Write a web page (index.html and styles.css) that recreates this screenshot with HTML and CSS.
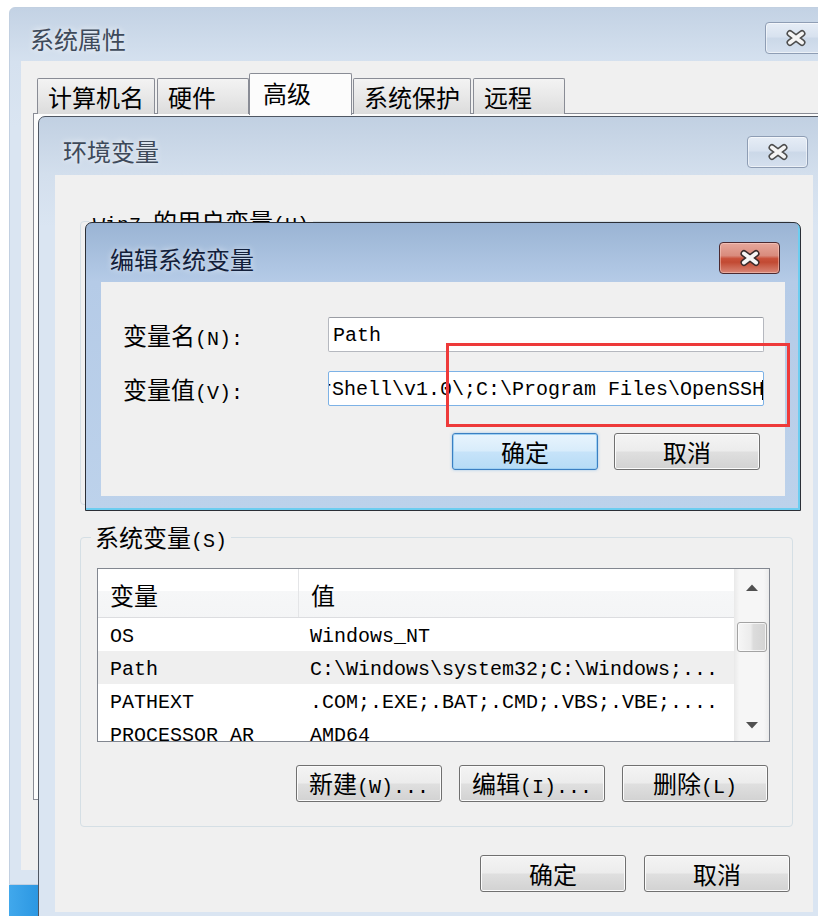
FILE: index.html
```html
<!DOCTYPE html>
<html lang="zh-CN">
<head>
<meta charset="utf-8">
<title>系统属性</title>
<link rel="stylesheet" href="styles.css">
</head>
<body>
<div class="desk">

  <div class="window win-sys">
    <div class="titlebar">
      <span class="title">系统属性</span>
      <button class="close">
        <svg width="24" height="18" viewBox="0 0 24 18"><path d="M6 4.5L18 13.5M18 4.5L6 13.5" stroke="#4d4d4d" stroke-width="7" stroke-linecap="round"/><path d="M6 4.5L18 13.5M18 4.5L6 13.5" stroke="#f4f4f4" stroke-width="4" stroke-linecap="round"/></svg>
      </button>
    </div>
    <div class="client sys-client">
      <div class="tabs">
        <div class="tab">计算机名</div>
        <div class="tab">硬件</div>
        <div class="tab sel">高级</div>
        <div class="tab">系统保护</div>
        <div class="tab">远程</div>
      </div>
      <div class="tabpanel"></div>
    </div>
  </div>

  <div class="taskbar"></div>

  <div class="window win-env">
    <div class="titlebar">
      <span class="title">环境变量</span>
      <button class="close">
        <svg width="24" height="18" viewBox="0 0 24 18"><path d="M6 4.5L18 13.5M18 4.5L6 13.5" stroke="#4d4d4d" stroke-width="7" stroke-linecap="round"/><path d="M6 4.5L18 13.5M18 4.5L6 13.5" stroke="#f4f4f4" stroke-width="4" stroke-linecap="round"/></svg>
      </button>
    </div>
    <div class="client env-client">
      <div class="group group-user">
        <div class="group-label"><span class="m">Win7 </span>的用户变量<span class="m">(U)</span></div>
      </div>
      <div class="group">
        <div class="group-label">系统变量<span class="m">(S)</span></div>
        <div class="list">
          <div class="list-body">
            <div class="lrow head"><div class="c1">变量</div><div class="c2">值</div></div>
            <div class="lrow"><div class="c1 m">OS</div><div class="c2 m">Windows_NT</div></div>
            <div class="lrow hl"><div class="c1 m">Path</div><div class="c2 m">C:\Windows\system32;C:\Windows;...</div></div>
            <div class="lrow"><div class="c1 m">PATHEXT</div><div class="c2 m">.COM;.EXE;.BAT;.CMD;.VBS;.VBE;....</div></div>
            <div class="lrow"><div class="c1 m">PROCESSOR_AR</div><div class="c2 m">AMD64</div></div>
          </div>
          <div class="vscroll">
            <div class="sarrow"><svg width="12" height="7" viewBox="0 0 12 7"><path d="M0 7L6 0.5L12 7Z" fill="#505050"/></svg></div>
            <div class="thumb"></div>
            <div class="strack"></div>
            <div class="sarrow"><svg width="12" height="7" viewBox="0 0 12 7"><path d="M0 0L6 6.5L12 0Z" fill="#505050"/></svg></div>
          </div>
        </div>
        <div class="btnrow">
          <button class="btn">新建<span class="m">(W)...</span></button>
          <button class="btn">编辑<span class="m">(I)...</span></button>
          <button class="btn">删除<span class="m">(L)</span></button>
        </div>
      </div>
      <div class="btnrow bottom">
        <button class="btn">确定</button>
        <button class="btn">取消</button>
      </div>
    </div>
  </div>

  <div class="window win-edit">
    <div class="titlebar">
      <span class="title">编辑系统变量</span>
      <button class="close red">
        <svg width="24" height="18" viewBox="0 0 24 18"><path d="M6 4.5L18 13.5M18 4.5L6 13.5" stroke="#3a2a2a" stroke-width="7" stroke-linecap="round"/><path d="M6 4.5L18 13.5M18 4.5L6 13.5" stroke="#f6f6f6" stroke-width="4" stroke-linecap="round"/></svg>
      </button>
    </div>
    <div class="client edit-client">
      <div class="form">
        <div class="flabel">变量名<span class="m">(N):</span></div>
        <div class="field"><span class="m ftext">Path</span></div>
        <div class="flabel">变量值<span class="m">(V):</span></div>
        <div class="field focus"><span class="m ftext">C:\Windows\System32\WindowsPowerShell\v1.0\;C:\Program Files\OpenSSH</span><span class="caret"></span></div>
      </div>
      <div class="btnrow edit-btns">
        <button class="btn default">确定</button>
        <button class="btn">取消</button>
      </div>
    </div>
    <div class="mark"></div>
  </div>

</div>
</body>
</html>
```

FILE: styles.css
```css
* { box-sizing: border-box; }
html, body { margin: 0; padding: 0; }
body {
  width: 818px;
  height: 916px;
  overflow: hidden;
  background: #ffffff;
  font-family: "Noto Sans CJK SC", sans-serif;
  font-size: 24px;
  color: #000;
}
button { font: inherit; color: inherit; margin: 0; }
.desk { position: relative; width: 818px; height: 916px; overflow: hidden; }
.m { font-family: "Liberation Mono", monospace; font-size: 20px; }

/* windows */
.window {
  position: absolute;
  display: flex;
  flex-direction: column;
  border: 1px solid;
  overflow: hidden;
}
.titlebar { display: flex; align-items: flex-start; flex: none; }
.title { line-height: 36px; white-space: nowrap; color: #3e4a5a; text-shadow: 0 0 6px rgba(255,255,255,0.9); }
.client { background: #f0f0f0; flex: none; }

.close {
  margin-left: auto;
  width: 61px;
  height: 32px;
  padding: 0;
  display: flex;
  align-items: center;
  justify-content: center;
  border: 1px solid #8e9db4;
  border-radius: 4px;
  background: linear-gradient(#e6edf6, #d8e2ef 45%, #cbd8e8 52%, #d5e0ee);
  box-shadow: inset 0 0 0 1px rgba(255,255,255,0.55);
  flex: none;
}
.close.red {
  border-color: #4c2a30;
  background: linear-gradient(#e6a89c, #d98b7d 42%, #c9513b 52%, #c24a33 64%, #d98777);
  box-shadow: inset 0 0 0 1px rgba(255,220,210,0.45);
}

/* system properties */
.win-sys {
  left: 9px; top: 7px; width: 830px; height: 878px;
  border-color: #c2d0e1;
  border-radius: 6px 6px 0 0;
  background: linear-gradient(#c3d2e4, #d5e1ef 54px, #dae5f2 120px, #dae5f2);
}
.win-sys .titlebar { height: 53px; padding: 14px 12px 0 20px; }
.win-sys .title { margin-top: -1px; }
.sys-client {
  margin-left: 11px;
  width: 820px;
  height: 809px;
  padding: 12px 0 0 12px;
  display: flex;
  flex-direction: column;
}
.tabs {
  display: flex;
  align-items: flex-end;
  height: 41px;
  margin-left: 4px;
  margin-bottom: -1px;
  position: relative;
  z-index: 1;
}
.tab {
  height: 36px;
  min-width: 92px;
  padding: 0 10px;
  margin-right: 2px;
  border: 1px solid #898c95;
  border-bottom: none;
  border-radius: 2px 2px 0 0;
  background: linear-gradient(#f3f3f3, #e8e8e8 50%, #dcdcdc);
  line-height: 35px;
  white-space: nowrap;
}
.tab.sel {
  height: 42px;
  min-width: 103px;
  margin: 0 1px -1px -2px;
  padding: 0 13px;
  background: #fcfcfc;
  line-height: 38px;
}
.tabpanel {
  height: 687px;
  border: 1px solid #898c95;
  background: #fcfcfc;
}
.taskbar {
  position: absolute;
  left: 9px; top: 885px; width: 30px; height: 31px;
  background: linear-gradient(90deg, #41a8ec, #2b97e2);
}

/* environment variables */
.win-env {
  left: 38px; top: 116px; width: 792px; height: 810px;
  border-color: #4f5763;
  border-radius: 7px 7px 0 0;
  background: linear-gradient(#c1d0e2, #d3dfed 58px, #dae5f2 110px);
}
.win-env .titlebar { height: 58px; padding: 19px 21px 0 24px; }
.win-env .title { margin-top: -3px; }
.env-client {
  margin-left: 16px;
  width: 758px;
  height: 737px;
  padding: 0 20px 0 25px;
  display: flex;
  flex-direction: column;
}
.group {
  display: flex;
  flex-direction: column;
  border: 1px solid #d5dfe5;
  border-radius: 4px;
  padding: 0 24px 24px 16px;
  flex: none;
}
.group-user { margin-top: 46px; height: 284px; }
.group-user + .group { margin-top: 32px; }
.group-label {
  align-self: flex-start;
  margin: -16px 0 0 -6px;
  padding: 0 4px;
  line-height: 30px;
  background: #f0f0f0;
  white-space: nowrap;
}
.group-user .group-label { margin-left: -8px; }

.list {
  margin-top: 11px;
  margin-right: -2px;
  height: 174px;
  border: 1px solid #828790;
  background: #fff;
  display: flex;
  overflow: hidden;
}
.list-body { flex: 1; overflow: hidden; }
.lrow { display: flex; height: 33px; align-items: center; padding-top: 3px; white-space: nowrap; }
.lrow.hl { background: #efefef; }
.c1 { width: 200px; padding-left: 12px; flex: none; }
.c2 { padding-left: 12px; flex: 1; }
.lrow.head {
  height: 49px;
  padding-top: 0;
  align-items: stretch;
  background: linear-gradient(#ffffff 45%, #f6f7f8 45%, #f4f5f6);
  border-bottom: 1px solid #dcdde0;
}
.lrow.head .c1, .lrow.head .c2 { display: flex; align-items: center; padding-top: 3px; }
.lrow.head .c2 { border-left: 1px solid #e4e5e7; }

.vscroll {
  width: 35px;
  flex: none;
  display: flex;
  flex-direction: column;
  align-items: center;
  background: linear-gradient(90deg, #e9e9e9, #f6f6f6 15%, #f6f6f6 85%, #ebebeb);
}
.sarrow { height: 34px; display: flex; align-items: center; justify-content: center; flex: none; padding-top: 2px; }
.thumb {
  margin-top: 19px;
  width: 30px;
  height: 30px;
  border: 1px solid #a3a3a3;
  border-radius: 3px;
  background: linear-gradient(90deg, #f6f6f6, #ececec 45%, #dcdcdc 55%, #d3d3d3);
  box-shadow: inset 0 0 0 1px rgba(255,255,255,0.7);
  flex: none;
}
.strack { flex: 1; }

.btnrow { display: flex; justify-content: flex-end; gap: 17px; margin-top: 23px; flex: none; }
.btnrow.bottom { margin-top: 28px; margin-right: 3px; gap: 18px; }
.btn {
  width: 146px;
  height: 37px;
  padding: 0;
  border: 1px solid #707070;
  border-radius: 3px;
  background: linear-gradient(#f4f4f4, #ececec 48%, #dfdfdf 52%, #d2d2d2);
  box-shadow: inset 0 0 0 1px #fbfbfb;
  line-height: 34px;
  text-align: center;
  white-space: nowrap;
}
.btn.default {
  border-color: #3b7fc2;
  background: linear-gradient(#e8f4fd, #d8ecfb 48%, #c6e3f9 52%, #b6dbf6);
  box-shadow: inset 0 0 0 1px #9fd0f3, 0 0 3px rgba(80,160,230,0.5);
}

/* edit system variable */
.win-edit {
  left: 85px; top: 222px; width: 716px; height: 289px;
  border-color: #2b2f36;
  border-radius: 7px 7px 0 0;
  background: linear-gradient(#9ab4d4, #b5cbe7 59px, #bdd2eb);
  box-shadow: inset -2px -2px 0 #6ccdf0;
}
.win-edit .title { color: #13203a; text-shadow: 0 0 6px rgba(255,255,255,0.7); margin-top: -1px; }
.win-edit .titlebar { height: 59px; padding: 19px 20px 0 24px; }
.edit-client {
  margin-left: 15px;
  width: 684px;
  height: 214px;
  padding: 35px 25px 0 22px;
  display: flex;
  flex-direction: column;
}
.form {
  display: grid;
  grid-template-columns: 205px 436px;
  grid-auto-rows: 35px;
  row-gap: 19px;
}
.flabel { line-height: 35px; white-space: nowrap; }
.field {
  background: #fff;
  border: 1px solid #b5b8bf;
  border-top-color: #9a9da4;
  border-radius: 2px;
  padding: 2px 4px 0;
  display: flex;
  align-items: center;
  overflow: hidden;
  white-space: pre;
}
.ftext { flex: none; }
.field.focus {
  border-color: #7db2e6;
  justify-content: flex-end;
  padding-right: 0;
}
.caret { width: 1px; height: 20px; background: #000; flex: none; margin-left: -2px; }
.edit-btns { margin-top: 27px; gap: 16px; }

.mark {
  position: absolute;
  left: 360px;
  top: 120px;
  width: 344px;
  height: 84px;
  border: 3px solid #ee3a3a;
}
```
